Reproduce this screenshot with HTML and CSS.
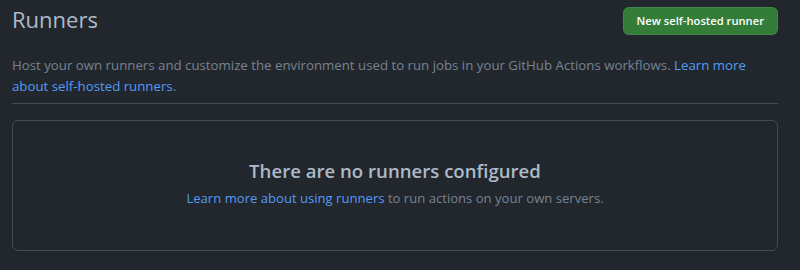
FILE: index.html
```html
<!DOCTYPE html>
<html lang="en">
    <head>
        <meta charset="utf-8" />
        <meta name="viewport" content="width=device-width, initial-scale=1" />
        <title>Runners</title>
        <link rel="stylesheet" href="styles.css">
    </head>
    <body>
        <main class="page">
            <header class="subhead">
                <h1 class="subhead-title">Runners</h1>
                <a class="btn-primary" href="#">New self-hosted runner</a>
            </header>
            <p class="subhead-desc">Host your own runners and customize the environment used to run jobs in your GitHub Actions workflows. <a href="#">Learn more about self-hosted runners</a>.</p>
            <section class="blankslate">
                <h2>There are no runners configured</h2>
                <p><a href="#">Learn more about using runners</a> to run actions on your own servers.</p>
            </section>
        </main>
    </body>
</html>
```

FILE: styles.css
```css
* { margin: 0; padding: 0; box-sizing: border-box; }
body {
    background-color: #22272e;
    color: #adbac7;
    font-family: "Open Sans", "Noto Sans", sans-serif;
    font-size: 13.25px;
}
a { color: #539bf5; text-decoration: none; }

.page { width: 766px; margin-left: 12px; }

.subhead {
    display: flex;
    justify-content: space-between;
    align-items: flex-start;
    padding-top: 7px;
}
.subhead-title {
    font-size: 22px;
    font-weight: 400;
    line-height: 28px;
    margin-top: -2px;
}
.btn-primary {
    display: inline-block;
    height: 28px;
    padding: 0 13px;
    line-height: 26px;
    font-size: 11.2px;
    font-weight: 600;
    color: #fff;
    background-color: #347d39;
    border: 1px solid rgba(205, 217, 229, 0.1);
    border-radius: 6px;
}

.subhead-desc {
    margin-top: 20px;
    line-height: 21px;
    color: #768390;
    padding-bottom: 6px;
    border-bottom: 1px solid #444c56;
}

.blankslate {
    margin-top: 16px;
    height: 131px;
    border: 1px solid #444c56;
    border-radius: 6px;
    text-align: center;
    padding-top: 36px;
}
.blankslate h2 {
    font-size: 18.6px;
    font-weight: 600;
    line-height: 28px;
    margin-bottom: 3px;
}
.blankslate p { color: #768390; line-height: 21px; font-size: 13.1px; }
```
